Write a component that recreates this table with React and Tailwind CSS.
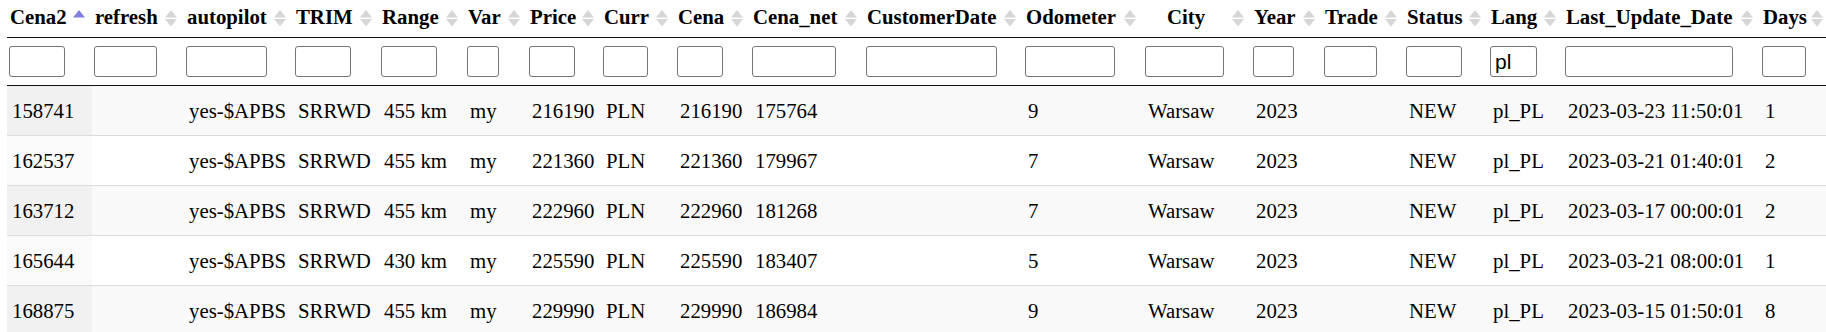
import React from "react";

const cols = [
  { name: "Cena2", w: 56, sorted: true },
  { name: "refresh", w: 63 },
  { name: "autopilot", w: 81 },
  { name: "TRIM", w: 56 },
  { name: "Range", w: 56 },
  { name: "Var", w: 32 },
  { name: "Price", w: 46 },
  { name: "Curr", w: 45 },
  { name: "Cena", w: 46 },
  { name: "Cena_net", w: 84 },
  { name: "CustomerDate", w: 131 },
  { name: "Odometer", w: 90 },
  { name: "City", w: 79, center: true },
  { name: "Year", w: 41 },
  { name: "Trade", w: 53 },
  { name: "Status", w: 56 },
  { name: "Lang", w: 47, value: "pl" },
  { name: "Last_Update_Date", w: 168 },
  { name: "Days", w: 44 },
];

const rows = [
  ["158741", "", "yes-$APBS", "SRRWD", "455 km", "my", "216190", "PLN", "216190", "175764", "", "9", "Warsaw", "2023", "", "NEW", "pl_PL", "2023-03-23 11:50:01", "1"],
  ["162537", "", "yes-$APBS", "SRRWD", "455 km", "my", "221360", "PLN", "221360", "179967", "", "7", "Warsaw", "2023", "", "NEW", "pl_PL", "2023-03-21 01:40:01", "2"],
  ["163712", "", "yes-$APBS", "SRRWD", "455 km", "my", "222960", "PLN", "222960", "181268", "", "7", "Warsaw", "2023", "", "NEW", "pl_PL", "2023-03-17 00:00:01", "2"],
  ["165644", "", "yes-$APBS", "SRRWD", "430 km", "my", "225590", "PLN", "225590", "183407", "", "5", "Warsaw", "2023", "", "NEW", "pl_PL", "2023-03-21 08:00:01", "1"],
  ["168875", "", "yes-$APBS", "SRRWD", "455 km", "my", "229990", "PLN", "229990", "186984", "", "9", "Warsaw", "2023", "", "NEW", "pl_PL", "2023-03-15 01:50:01", "8"],
];

// column widths measured off the screenshot
const grid =
  "grid grid-cols-[85px_92px_109px_86px_86px_62px_74px_74px_75px_114px_159px_120px_108px_71px_82px_84px_75px_197px_70px]";

function SortIcon({ active }) {
  return (
    <svg width="12" height="17" viewBox="0 0 12 17" className="mt-[5px] shrink-0">
      <polygon points="6,0 12,7.5 0,7.5" fill={active ? "#7f7fdf" : "#d6d6d6"} />
      <polygon points="0,9 12,9 6,16.5" fill={active ? "transparent" : "#d6d6d6"} />
    </svg>
  );
}

export default function App() {
  return (
    <div className="w-full overflow-hidden bg-white pl-[7px] text-black font-['Liberation_Serif','Times_New_Roman',serif] text-[20.8px] leading-[24px]">
      <div className="w-max">
        <div className={`${grid} h-[38px] border-b border-[#111]`}>
          {cols.map((c) => (
            <div key={c.name} className="flex items-start justify-between pt-[5px] pr-[7px]">
              <span className={`font-bold whitespace-nowrap ${c.center ? "pl-[24px]" : "pl-[3px]"}`}>
                {c.name}
              </span>
              <SortIcon active={c.sorted} />
            </div>
          ))}
        </div>

        <div className={`${grid} h-[48px] border-b border-[#111]`}>
          {cols.map((c) => (
            <div key={c.name} className="flex items-center pl-[2px]">
              <input
                defaultValue={c.value || ""}
                style={{ width: c.w }}
                className="h-[31px] rounded-[3px] border border-[#767676] bg-white px-[4px] font-['Liberation_Sans',Arial,sans-serif] text-[21px] leading-[24px] text-black outline-none"
              />
            </div>
          ))}
        </div>

        {rows.map((r, i) => (
          <div
            key={r[0]}
            className={`${grid} h-[50px] border-b border-[#ddd] ${i % 2 === 0 ? "bg-[#f9f9f9]" : "bg-white"}`}
          >
            {r.map((v, j) => (
              <div
                key={j}
                className={`flex items-center whitespace-nowrap pl-[5px] ${
                  j === 0 ? (i % 2 === 0 ? "bg-[#f1f1f1]" : "bg-[#fafafa]") : ""
                }`}
              >
                {v}
              </div>
            ))}
          </div>
        ))}
      </div>
    </div>
  );
}
